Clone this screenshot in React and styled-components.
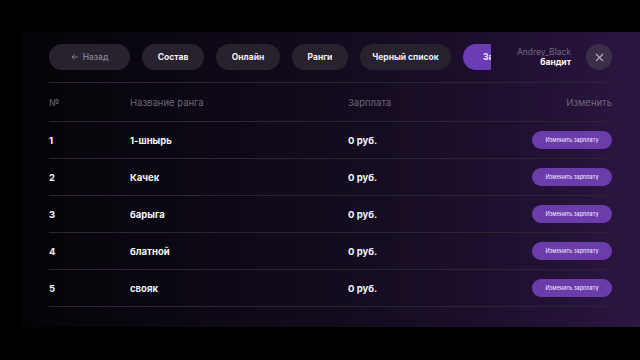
import React from "react";
import styled, { createGlobalStyle } from "styled-components";

const Global = createGlobalStyle`
  html, body { margin: 0; padding: 0; background: #000; }
  body { font-family: Inter, "Noto Sans", sans-serif; width: 640px; height: 360px; overflow: hidden; }
`;

const Page = styled.div`
  width: 640px;
  height: 360px;
  padding-top: 32px;
  padding-left: 22px;
  box-sizing: border-box;
  background: #000;
`;

const Panel = styled.div`
  width: 618px;
  height: 295px;
  box-sizing: border-box;
  padding: 12px 28px 0 27px;
  background: linear-gradient(90deg, #050307 0%, #0c0813 25%, #130b1d 50%, #1b0e2b 72%, #261339 90%, #2c1642 100%);
  display: flex;
  flex-direction: column;
`;

const TopBar = styled.div`
  display: flex;
  align-items: center;
  height: 26px;
  padding-bottom: 12px;
  border-bottom: 1px solid #2a2433;
`;

const Tabs = styled.div`
  display: flex;
  gap: 12px;
  width: 442px;
  overflow: hidden;
  flex: none;
`;

const Tab = styled.div`
  flex: none;
  height: 26px;
  width: ${(p) => p.$w}px;
  border-radius: 13px;
  background: ${(p) => (p.$active ? "#6a3db4" : "#27222e")};
  color: ${(p) => (p.$muted ? "#8d8796" : "#f2eff6")};
  font-size: 8.5px;
  font-weight: ${(p) => (p.$muted ? 500 : 700)};
  display: flex;
  align-items: center;
  justify-content: center;
  gap: 4px;
  white-space: nowrap;
`;

const User = styled.div`
  margin-left: auto;
  display: flex;
  flex-direction: column;
  align-items: flex-end;
  line-height: 10px;
`;

const UserName = styled.span`
  font-size: 8.5px;
  color: #6f6880;
`;

const UserRank = styled.span`
  font-size: 8.5px;
  font-weight: 700;
  color: #fff;
`;

const Close = styled.div`
  width: 26px;
  height: 26px;
  border-radius: 50%;
  background: #3a2e4a;
  margin-left: 15px;
  display: flex;
  align-items: center;
  justify-content: center;
`;

const Row = styled.div`
  display: grid;
  grid-template-columns: 81px 218px 1fr auto;
  align-items: center;
  height: ${(p) => (p.$head ? 38 : 36)}px;
  border-bottom: 1px solid #2a2433;
  font-size: ${(p) => (p.$head ? "9.5px" : "9.5px")};
  font-weight: ${(p) => (p.$head ? 400 : 700)};
  color: ${(p) => (p.$head ? "#6c6677" : "#f6f4f8")};
`;

const Right = styled.div`
  justify-self: end;
`;

const EditButton = styled.div`
  width: 80px;
  height: 18px;
  border-radius: 9px;
  background: #6a3dab;
  color: #e8def5;
  font-size: 5.5px;
  font-weight: 500;
  display: flex;
  align-items: center;
  justify-content: center;
`;

const tabs = [
  { t: "Назад", w: 81, muted: true, back: true },
  { t: "Состав", w: 62 },
  { t: "Онлайн", w: 64 },
  { t: "Ранги", w: 56 },
  { t: "Черный список", w: 91 },
  { t: "Зарплата", w: 80, active: true },
];

const ranks = ["1-шнырь", "Качек", "барыга", "блатной", "свояк"];

export default function App() {
  return (
    <>
      <Global />
      <Page>
        <Panel>
          <TopBar>
            <Tabs>
              {tabs.map((x) => (
                <Tab key={x.t} $w={x.w} $muted={x.muted} $active={x.active}>
                  {x.back && (
                    <svg width="8" height="8" viewBox="0 0 8 8" fill="none" stroke="#8d8796" strokeWidth="0.9">
                      <path d="M7 4H1M3.5 1.5L1 4l2.5 2.5" />
                    </svg>
                  )}
                  {x.t}
                </Tab>
              ))}
            </Tabs>
            <User>
              <UserName>Andrey_Black</UserName>
              <UserRank>бандит</UserRank>
            </User>
            <Close>
              <svg width="9" height="9" viewBox="0 0 9 9" stroke="#b7aec4" strokeWidth="1.1">
                <path d="M1 1l7 7M8 1L1 8" />
              </svg>
            </Close>
          </TopBar>
          <Row $head>
            <span>№</span>
            <span>Название ранга</span>
            <span>Зарплата</span>
            <Right>Изменить</Right>
          </Row>
          {ranks.map((r, i) => (
            <Row key={r}>
              <span>{i + 1}</span>
              <span>{r}</span>
              <span>0 руб.</span>
              <Right>
                <EditButton>Изменить зарплату</EditButton>
              </Right>
            </Row>
          ))}
        </Panel>
      </Page>
    </>
  );
}
